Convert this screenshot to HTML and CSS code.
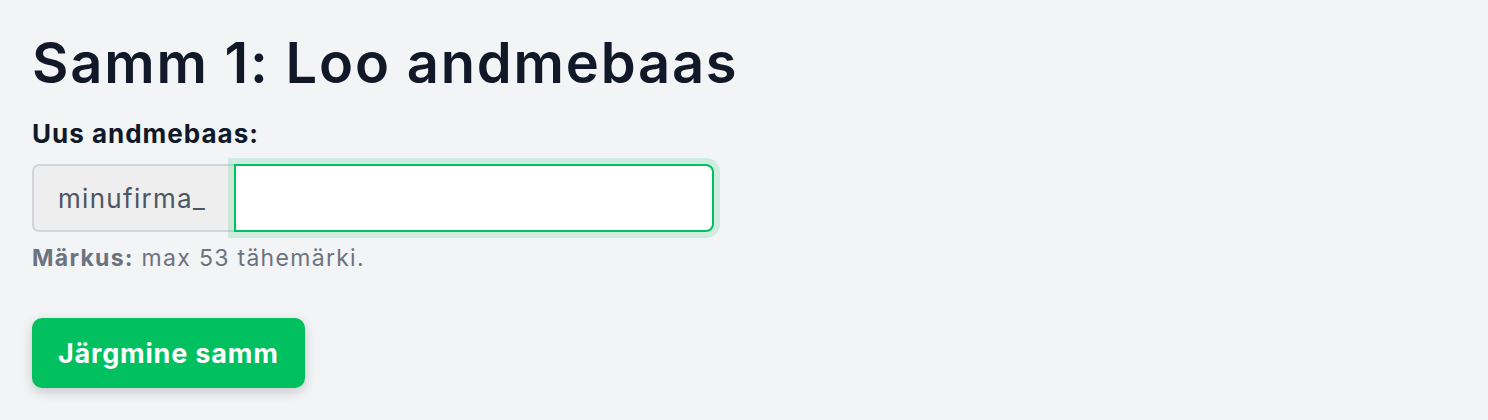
FILE: index.html
```html
<!DOCTYPE html>
<html lang="et">
<head>
    <meta charset="UTF-8">
    <meta name="viewport" content="width=device-width, initial-scale=1.0">
    <title>Samm 1: Loo andmebaas</title>
    <link rel="stylesheet" href="styles.css">
</head>
<body>
    <div class="step">
        <h1>Samm 1: Loo andmebaas</h1>

        <label class="field-label" for="dbName">Uus andmebaas:</label>
        <div class="input-group">
            <span class="prefix">minufirma_</span>
            <input type="text" id="dbName" class="db-input" maxlength="53" autofocus>
        </div>
        <p class="note"><strong>Märkus:</strong> max 53 tähemärki.</p>

        <button class="next-btn">Järgmine samm</button>
    </div>
</body>
</html>
```

FILE: styles.css
```css
body {
    font-family: Inter, "Noto Sans", sans-serif;
    margin: 0;
    background: #f3f4f6;
    color: #111827;
}
.step {
    padding: 29px 32px;
}
h1 {
    font-size: 56px;
    font-weight: 600;
    line-height: 68px;
    letter-spacing: 1.8px;
    margin: 0 0 21px;
}
.field-label {
    display: block;
    font-size: 26px;
    font-weight: 700;
    line-height: 32px;
    letter-spacing: 1px;
    margin-bottom: 14px;
}
.input-group {
    display: flex;
    width: 682px;
    height: 68px;
}
.prefix {
    display: flex;
    align-items: center;
    padding: 0 28px 0 24px;
    background: #eeeeee;
    border: 2px solid #d1d5db;
    border-right: none;
    border-radius: 7px 0 0 7px;
    font-size: 26px;
    letter-spacing: 1.3px;
    color: #4b5563;
}
.db-input {
    flex: 1;
    min-width: 0;
    border: 2px solid #00c060;
    border-radius: 0 8px 8px 0;
    box-shadow: 0 0 0 6px rgba(0, 192, 96, 0.15);
    background: #ffffff;
    padding: 0 25px;
    font-size: 26px;
    font-family: inherit;
    color: #111827;
    caret-color: #111827;
    outline: none;
}
.note {
    margin: 12px 0 0;
    font-size: 23px;
    line-height: 28px;
    letter-spacing: 1.3px;
    color: #6b7280;
}
.note strong {
    font-weight: 700;
}
.next-btn {
    margin-top: 46px;
    background: #00c060;
    color: #ffffff;
    border: none;
    border-radius: 10px;
    height: 70px;
    padding: 0 26px;
    font-family: inherit;
    font-size: 27px;
    font-weight: 700;
    letter-spacing: 0.8px;
    box-shadow: 0 4px 12px rgba(0, 0, 0, 0.18);
    cursor: pointer;
}
```
